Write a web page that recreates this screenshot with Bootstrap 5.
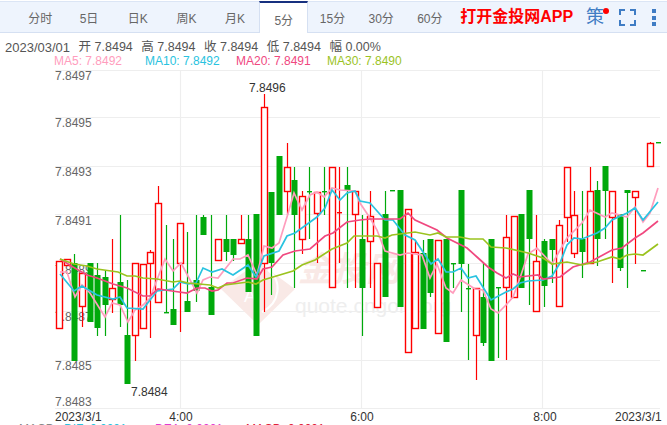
<!DOCTYPE html>
<html lang="zh-CN">
<head>
    <meta charset="UTF-8">
    <meta name="viewport" content="width=device-width, initial-scale=1.0">
    <title>K线图</title>
    <link href="https://cdn.jsdelivr.net/npm/bootstrap@5.3.0/dist/css/bootstrap.min.css" rel="stylesheet">
    <style>
        html, body { height: 425px; overflow: hidden; }
        body { background: #fff; font-family: "Liberation Sans", "Noto Sans CJK SC", sans-serif; font-size: 12px; color: #555; }
        .top-bar { margin-top: 1px; height: 32px; background: #eef4fd; border-top: 1px solid #dbe5f5; border-bottom: 1px solid #d5e0f2; padding-left: 15px; }
        .tab-item { width: 48.7px; height: 31px; line-height: 34px; padding: 0; text-align: center; color: #666; font-size: 12px; }
        .tab-item:first-child { margin-left: 1px; }
        .tab-item.active { height: 32px; margin-top: -1px; line-height: 37px; background: #fff; border-top: 2px solid #17307f; border-left: 1px solid #d5e0f2; border-right: 1px solid #d5e0f2; }
        .app-link { margin-left: 6px; color: #f00; font-size: 16px; font-weight: 700; line-height: 30px; white-space: nowrap; }
        .ce-box { width: 20px; margin-left: 13px; color: #3f7cc4; font-size: 18px; line-height: 30px; }
        .ce-dot { top: 6px; right: -3px; width: 6px; height: 6px; background: #f00; }
        .fs-icon { margin-left: 13px; margin-top: 7px; }
        .more-icon { margin-left: 16px; margin-top: 7px; }
        .info-row { height: 21px; line-height: 29px; padding-left: 5px; gap: 8.5px; color: #555; font-size: 12.5px; white-space: pre; }
        .info-date { font-size: 13px; }
        .ma-row { height: 14px; line-height: 15px; padding-left: 54px; }
        .ma-row span { width: 91px; }
        .ma5 { color: #ff9dbd; }
        .ma10 { color: #29c3e0; }
        .ma20 { color: #f0487f; }
        .ma30 { color: #9bc31f; }
        .chart { display: block; }
        .chart text { font-family: "Liberation Sans", "Noto Sans CJK SC", sans-serif; font-size: 12px; }
        .macd-row { height: 14px; margin-top: -1px; line-height: 14px; padding-left: 19px; }
        .macd-row span { width: 91px; }
        .macd-row .macd-name { width: 45px; color: #888; }
        .macd-dif { color: #29c3e0; }
        .macd-dea { color: #e23bd0; }
        .macd-val { color: #e0203a; }
    </style>
</head>
<body>
    <div class="top-bar d-flex">
        <a class="tab-item text-decoration-none">分时</a>
        <a class="tab-item text-decoration-none">5日</a>
        <a class="tab-item text-decoration-none">日K</a>
        <a class="tab-item text-decoration-none">周K</a>
        <a class="tab-item text-decoration-none">月K</a>
        <a class="tab-item text-decoration-none active">5分</a>
        <a class="tab-item text-decoration-none">15分</a>
        <a class="tab-item text-decoration-none">30分</a>
        <a class="tab-item text-decoration-none">60分</a>
        <a class="app-link text-decoration-none">打开金投网APP</a>
        <div class="ce-box position-relative">策<span class="ce-dot position-absolute rounded-circle"></span></div>
        <svg class="fs-icon" width="17" height="17" viewBox="0 0 17 17" fill="none" stroke="#3f7cc4" stroke-width="2">
            <path d="M1 6V1H6M11 1H16V6M16 11V16H11M6 16H1V11"/>
        </svg>
        <svg class="more-icon" width="4" height="18" viewBox="0 0 4 18" fill="#3f7cc4">
            <rect x="0" y="0" width="4" height="4"/><rect x="0" y="7" width="4" height="4"/><rect x="0" y="13" width="4" height="4"/>
        </svg>
    </div>
    <div class="info-row d-flex">
        <span class="info-date">2023/03/01</span><span>开 7.8494</span><span>高 7.8494</span><span>收 7.8494</span><span>低 7.8494</span><span>幅 0.00%</span>
    </div>
    <div class="ma-row d-flex">
        <span class="ma5">MA5: 7.8492</span><span class="ma10">MA10: 7.8492</span><span class="ma20">MA20: 7.8491</span><span class="ma30">MA30: 7.8490</span>
    </div>
    <svg id="chart" class="chart" width="667" height="355" viewBox="0 68 667 355"></svg>
    <div class="macd-row d-flex">
        <span class="macd-name">MACD</span><span class="macd-dif">DIF: 0.0001</span><span class="macd-dea">DEA: 0.0001</span><span class="macd-val">MACD: 0.0001</span>
    </div>
    <script>
        // x, 颜色, 实体上, 实体下, 上影, 下影
        const candles = [
            [59,'r',261,328],[67,'r',259,265],[74,'g',263,361,254],[82,'r',273,306,273,327],[90,'g',263,322],
            [97,'g',275,328,263,336],[105,'g',277,305,270,336],[112,'r',288,299,239,313],[120,'g',282,305,215,327],
            [127,'g',335,384,280],[135,'r',263,335,263,361],[143,'r',264,328],[150,'r',252,263,250,338],[158,'r',203,302,186],
            [166,'g',312,312,225],[173,'g',309,325,239],[180,'r',223,263,223,332],[187,'g',301,312,232],[196,'g',280,291,215,302],
            [203,'g',217,235,215],[211,'g',287,315,215],[218,'r',239,260],[226,'g',239,252,215,261],[233,'g',239,255,239,261],
            [241,'r',239,243,215,244],[248,'g',239,292,215],[256,'g',214,336],[264,'r',107,263,94,312],[271,'g',192,263,192,295],
            [279,'g',156,215],[287,'r',167,191,143,215],[294,'g',180,215,167,288],[302,'r',196,239,191,254],[309,'g',191,191,167,239],
            [317,'r',192,213,192,263],[324,'g',191,191,167,215],[332,'r',167,287],[339,'r',212,212,167,263],[347,'g',185,191,167,288],
            [355,'r',191,214,191,288],[362,'g',239,288,215,336],[370,'r',216,241,191,288],[377,'r',263,307],[385,'g',214,297,191],
            [392,'g',190,190],[400,'g',190,307],[408,'r',209,352],[415,'r',252,328,240],[423,'g',253,329,240],[430,'g',239,293,239,297],
            [438,'r',240,333],[446,'g',239,342],[453,'g',263,263,263,288],[461,'g',190,264,190,312],[468,'g',288,288,264,360],
            [476,'r',288,335,288,380],[483,'g',297,343,263,346],[491,'g',239,361],[498,'g',287,287,287,358],[506,'r',237,287,215,360],
            [514,'r',216,297],[521,'g',214,288],[529,'g',190,239,190,305],[536,'r',261,311,215],[544,'g',241,286,239,307],
            [552,'g',239,250,239,283],[559,'r',225,306,220],[567,'r',167,217,167,242],[574,'r',215,253,191,258],[582,'g',239,252,191,278],
            [590,'r',191,263,167],[597,'g',190,239,181,266],[605,'g',166,191,166,239],[612,'r',191,217,191,283],[620,'g',214,268,214,271],
            [627,'g',190,193,190,288],[635,'r',191,197,191,264],[643,'g',270,270],[650,'r',143,166,142],[658,'g',142,142]
        ];
        const lines = [
            ['#ff9dbd', [[60,272],[67,272],[75,297],[82,285],[90,293],[105,317],[112,303],[120,305],[128,322],[135,310],[143,305],[150,298],[165,259],[173,271],[181,263],[197,293],[203,280],[210,277],[218,278],[233,259],[240,259],[248,255],[257,275],[264,246],[272,248],[279,243],[287,217],[294,193],[302,210],[310,195],[317,192],[324,197],[332,188],[340,190],[355,191],[360,203],[370,218],[377,230],[385,251],[400,255],[408,253],[422,255],[430,278],[437,264],[446,288],[453,293],[461,280],[475,289],[483,290],[491,309],[498,313],[506,305],[513,297],[520,278],[528,254],[537,248],[552,264],[567,238],[582,223],[590,210],[605,217],[612,213],[627,217],[635,207],[643,222],[650,213],[658,188]]],
            ['#29c3e0', [[60,274],[74,291],[82,286],[97,295],[113,299],[120,297],[127,308],[143,309],[157,291],[173,289],[180,282],[188,284],[196,283],[203,268],[212,272],[222,269],[233,275],[248,265],[256,277],[264,256],[279,251],[287,236],[295,233],[317,217],[325,208],[332,190],[340,200],[347,193],[355,191],[360,201],[370,203],[385,220],[393,220],[405,235],[415,240],[431,264],[438,259],[446,272],[453,272],[461,268],[468,278],[476,276],[491,300],[506,292],[513,289],[520,283],[528,281],[543,280],[552,276],[560,263],[567,245],[574,238],[582,239],[597,233],[605,228],[612,220],[627,213],[635,208],[643,220],[658,202]]],
            ['#f0487f', [[60,259],[73,267],[87,275],[97,278],[113,284],[127,288],[143,296],[150,296],[158,289],[172,291],[187,293],[197,288],[205,288],[212,291],[218,290],[227,283],[233,283],[247,278],[257,279],[263,269],[272,267],[283,255],[295,251],[310,249],[325,236],[333,233],[347,222],[360,220],[370,219],[400,219],[408,213],[415,220],[437,230],[447,238],[467,248],[477,257],[488,267],[497,273],[506,278],[513,274],[520,277],[528,276],[538,275],[543,279],[560,277],[573,267],[590,262],[612,250],[622,248],[635,238],[643,233],[658,221]]],
            ['#9bc31f', [[60,259],[74,264],[87,266],[97,269],[118,272],[127,276],[135,276],[143,278],[157,279],[173,282],[180,281],[188,283],[210,285],[218,288],[225,285],[248,282],[256,284],[263,280],[293,271],[302,265],[315,260],[332,249],[347,243],[354,236],[370,236],[377,236],[385,238],[392,235],[400,234],[415,232],[430,235],[438,233],[446,237],[460,237],[470,239],[483,239],[491,247],[506,248],[528,253],[543,258],[552,264],[567,262],[582,265],[590,263],[597,262],[612,257],[620,259],[627,255],[635,254],[643,255],[658,244]]]
        ];
        const yLines = [70, 117, 166, 214, 263, 311, 360, 408];
        const xLines = [181, 362, 543];
        const yLabels = [['7.8497',80],['7.8495',127],['7.8493',176],['7.8491',225],['7.8489',274],['7.8487',321],['7.8485',370],['7.8483',406]];

        let svg = '';
        // 网格
        yLines.forEach(y => { svg += `<line x1="55" x2="660" y1="${y + .5}" y2="${y + .5}" stroke="#eee" stroke-width="1.2"/>`; });
        xLines.forEach(x => { svg += `<line x1="${x - .5}" x2="${x - .5}" y1="70" y2="408" stroke="#eee" stroke-width="1.2"/>`; });
        // 水印
        svg += `<polygon points="221,289 258,262 295,289 258,325" fill="#f9e9e6"/>`;
        svg += `<path d="M262 312C280 303 283 281 268 270" fill="none" stroke="#fff" stroke-width="2"/>`;
        svg += `<text x="244" y="302" fill="#fff" style="font-size:18px">A</text>`;
        svg += `<text x="298" y="281" fill="#f9e9e6" style="font-size:34px;font-weight:700;font-style:italic">金投网</text>`;
        svg += `<text x="295" y="313" fill="#eee" style="font-size:21px">quote.cngold.org</text>`;
        // Y轴
        yLabels.forEach(l => { svg += `<text x="55" y="${l[1]}" fill="#666">${l[0]}</text>`; });
        // K线
        candles.forEach(c => {
            const [x, t, top, bot, wt, wb] = c;
            const col = t === 'r' ? '#f00' : '#00a90b';
            const hi = wt === undefined ? top : wt;
            const lo = wb === undefined ? bot : wb;
            svg += `<line x1="${x + .5}" x2="${x + .5}" y1="${hi}" y2="${lo}" stroke="${col}" stroke-width="1.2"/>`;
            if (top === bot) {
                svg += `<rect x="${x - 2}" y="${top}" width="5" height="1.4" fill="${col}"/>`;
            } else if (t === 'r') {
                svg += `<rect x="${x - 2.5}" y="${top + .5}" width="6" height="${bot - top}" fill="#fff" stroke="${col}" stroke-width="1.4"/>`;
            } else {
                svg += `<rect x="${x - 2.5}" y="${top}" width="6" height="${bot - top}" fill="${col}"/>`;
            }
        });
        // 均线
        lines.forEach(l => {
            svg += `<polyline points="${l[1].map(p => p.join(',')).join(' ')}" fill="none" stroke="${l[0]}" stroke-width="1.7"/>`;
        });
        // 标注
        svg += `<text x="249" y="92" fill="#333">7.8496</text>`;
        svg += `<text x="131" y="396" fill="#333">7.8484</text>`;
        // X轴
        svg += `<text x="55" y="421" fill="#333">2023/3/1</text>`;
        [['4:00',181],['6:00',362],['8:00',545]].forEach(l => { svg += `<text x="${l[1]}" y="421" fill="#333" text-anchor="middle">${l[0]}</text>`; });
        svg += `<text x="615" y="421" fill="#333">2023/3/1</text>`;
        document.getElementById('chart').innerHTML = svg;
    </script>
    <script src="https://cdn.jsdelivr.net/npm/bootstrap@5.3.0/dist/js/bootstrap.bundle.min.js"></script>
</body>
</html>
